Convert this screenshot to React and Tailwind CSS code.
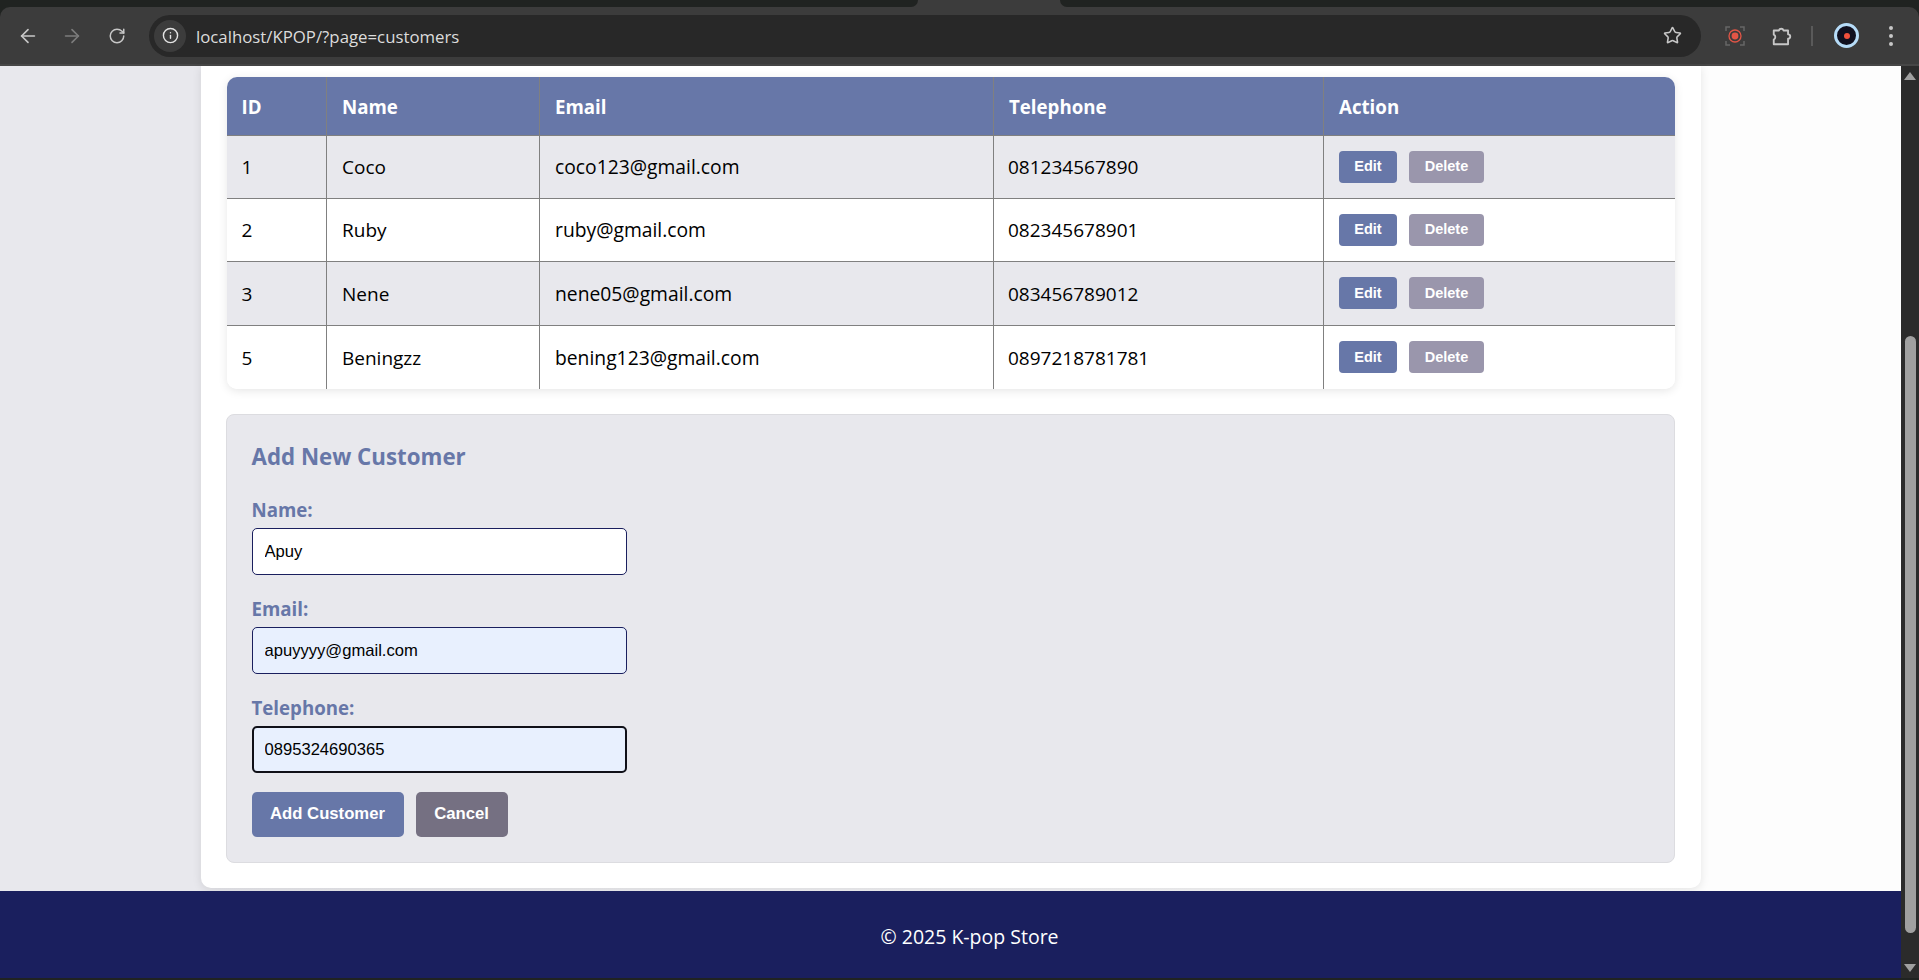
import React from 'react';
import { ArrowLeft, ArrowRight, RotateCw, Info, Star } from 'lucide-react';

const ROWS = [
  { id: 1, name: 'Coco', email: 'coco123@gmail.com', phone: '081234567890', height: 'h-[63px]' },
  { id: 2, name: 'Ruby', email: 'ruby@gmail.com', phone: '082345678901', height: 'h-[63px]' },
  { id: 3, name: 'Nene', email: 'nene05@gmail.com', phone: '083456789012', height: 'h-[64px]' },
  { id: 5, name: 'Beningzz', email: 'bening123@gmail.com', phone: '0897218781781', height: 'h-[64px]' },
];

const HEADERS = ['ID', 'Name', 'Email', 'Telephone', 'Action'];
const UI_FONT = "font-['Open_Sans','Noto_Sans',sans-serif]";

function BrowserBar() {
  return (
    <div className="h-[66px] shrink-0 bg-[#202321]">
      <div className="flex h-[7px] bg-[#3c3c3c]">
        <div className="w-[918px] rounded-br-[10px] bg-[#202321]" />
        <div className="ml-[142px] flex-1 rounded-bl-[10px] bg-[#202321]" />
      </div>
      <div className="flex h-[59px] items-center rounded-t-[10px] border-b-2 border-[#464646] bg-[#3c3c3c] pl-[17px] pr-[17px]">
        <ArrowLeft className="h-[22px] w-[22px] text-[#c7c7c7]" strokeWidth={1.8} />
        <ArrowRight className="ml-[22px] h-[22px] w-[22px] text-[#7c7c7c]" strokeWidth={1.8} />
        <RotateCw className="ml-[25px] h-[18px] w-[18px] text-[#c7c7c7]" strokeWidth={2} />
        <div className="ml-[23px] flex h-[42px] w-[1552px] items-center rounded-full bg-[#282828] pl-[5px] pr-[19px]">
          <div className="flex h-[32px] w-[32px] items-center justify-center rounded-full bg-[#3c3c3c]">
            <Info className="h-[17px] w-[17px] text-[#e3e3e3]" strokeWidth={2} />
          </div>
          <span className={`ml-[10px] pt-[2px] text-[16.8px] text-[#dcdcdc] ${UI_FONT}`}>localhost/KPOP/?page=customers</span>
          <Star className="ml-auto h-[19px] w-[19px] text-[#c7c7c7]" strokeWidth={2} />
        </div>
        <svg className="ml-[24px] h-[20px] w-[20px]" viewBox="0 0 20 20" fill="none">
          <path d="M1 5V1h4M15 1h4v4M19 15v4h-4M5 19H1v-4" stroke="#666" strokeWidth="1.5" />
          <circle cx="10" cy="10" r="6" stroke="#e25546" strokeWidth="1.3" />
          <circle cx="10" cy="10" r="3.4" fill="#e25546" />
        </svg>
        <svg className="ml-[26px] h-[22px] w-[22px]" viewBox="0 0 20 20" fill="none">
          <path
            d="M2.5 5H7.2a2.2 2.2 0 0 1 4.2 0H15.5V8.5a2 2 0 0 1 0 4V17.5H2.5V13.2a2.4 2.4 0 0 0 0-4.4Z"
            stroke="#c7c7c7"
            strokeWidth="1.7"
            strokeLinejoin="round"
          />
        </svg>
        <div className="ml-[18px] h-[20px] w-[2px] bg-[#5a5a5a]" />
        <div className="ml-[21px] flex h-[25px] w-[25px] items-center justify-center rounded-full border-[3px] border-[#b6dcf8] bg-[#10101f]">
          <div className="h-[6px] w-[6px] rounded-full bg-[#f0503c]" />
        </div>
        <div className="ml-[30px] flex flex-col gap-[4px]">
          <span className="h-[4px] w-[4px] rounded-full bg-[#c7c7c7]" />
          <span className="h-[4px] w-[4px] rounded-full bg-[#c7c7c7]" />
          <span className="h-[4px] w-[4px] rounded-full bg-[#c7c7c7]" />
        </div>
      </div>
    </div>
  );
}

function Scrollbar() {
  return (
    <div className="flex w-[18px] shrink-0 flex-col items-center bg-[#2b2b2b]">
      <div className="mt-[6px] h-0 w-0 border-x-[6px] border-b-[8px] border-x-transparent border-b-[#a0a0a0]" />
      <div className="mt-[256px] h-[597px] w-[11px] rounded-full bg-[#a0a0a0]" />
      <div className="mt-[31px] h-0 w-0 border-x-[6px] border-t-[8px] border-x-transparent border-t-[#a0a0a0]" />
    </div>
  );
}

function CustomerTable() {
  return (
    <div className="overflow-hidden rounded-[10px] bg-white shadow-[0_2px_10px_rgba(0,0,0,0.1)]">
      <table className={`w-full table-fixed border-collapse text-[19px] ${UI_FONT}`}>
        <colgroup>
          <col className="w-[100px]" />
          <col className="w-[213px]" />
          <col className="w-[454px]" />
          <col className="w-[330px]" />
          <col />
        </colgroup>
        <thead>
          <tr className="h-[58px] bg-[#6777a8] text-left text-[18.7px] text-white">
            {HEADERS.map(h => (
              <th key={h} className="border-x border-b border-[#808080] px-[15px] pt-[2px] font-bold first:border-l-0 last:border-r-0">{h}</th>
            ))}
          </tr>
        </thead>
        <tbody>
          {ROWS.map((row, i) => (
            <tr key={row.id} className={`${row.height} text-black ${i % 2 === 0 ? 'bg-[#e8e8ed]' : 'bg-white'}`}>
              <td className="border-b border-[#808080] px-[15px] pt-[2px] [tr:last-child>&]:border-b-0">{row.id}</td>
              <td className="border-x border-b border-[#808080] px-[15px] pt-[2px] [tr:last-child>&]:border-b-0">{row.name}</td>
              <td className="border-x border-b border-[#808080] px-[15px] pt-[2px] text-[19.3px] [tr:last-child>&]:border-b-0">{row.email}</td>
              <td className="border-x border-b border-[#808080] pl-[14px] pr-[15px] pt-[2px] [tr:last-child>&]:border-b-0">{row.phone}</td>
              <td className="border-b border-[#808080] px-[15px] [tr:last-child>&]:border-b-0">
                <div className="flex gap-[12px] font-['Liberation_Sans',sans-serif] text-[14.5px] font-bold text-white">
                  <button className="h-[32px] w-[58px] rounded-[4px] bg-[#6777a8] pt-[1px]">Edit</button>
                  <button className="h-[32px] w-[75px] rounded-[4px] bg-[#9a96ac] pt-[1px]">Delete</button>
                </div>
              </td>
            </tr>
          ))}
        </tbody>
      </table>
    </div>
  );
}

function Field({ label, value, className }) {
  return (
    <div>
      <label className={`mb-[6px] block text-[18.7px] font-bold leading-[25px] text-[#6777a8] ${UI_FONT}`}>{label}</label>
      <input
        readOnly
        value={value}
        className={`block h-[47px] w-[375px] rounded-[5px] font-['Liberation_Sans',sans-serif] text-[16.6px] text-black outline-none ${className}`}
      />
    </div>
  );
}

function CustomerForm() {
  return (
    <div className="mt-[25px] -ml-[1px] h-[449px] rounded-[8px] border border-[#dcdce0] bg-[#e8e8ed] px-[25px] pt-[27px]">
      <h3 className={`mb-[25px] text-[22.3px] font-bold leading-[30px] text-[#6777a8] ${UI_FONT}`}>Add New Customer</h3>
      <div className="flex flex-col gap-[21px]">
        <Field label="Name:" value="Apuy" className="border border-[#1a1f5e] bg-white px-[12px]" />
        <Field label="Email:" value="apuyyyy@gmail.com" className="border border-[#1a1f5e] bg-[#e8f0fe] px-[12px]" />
        <Field label="Telephone:" value="0895324690365" className="border-2 border-[#101018] bg-[#e8f0fe] px-[11px]" />
      </div>
      <div className="mt-[19px] flex gap-[12px] font-['Liberation_Sans',sans-serif] text-[16.7px] font-bold text-white">
        <button className="h-[45px] w-[152px] rounded-[5px] bg-[#6777a8] pb-[1px]">Add Customer</button>
        <button className="h-[45px] w-[92px] rounded-[5px] bg-[#757082] pb-[1px]">Cancel</button>
      </div>
    </div>
  );
}

export default function App() {
  return (
    <div className="flex h-screen flex-col overflow-hidden bg-[#202321]">
      <BrowserBar />
      <div className="flex h-[912px] min-h-0">
        <div className="flex min-w-0 flex-1 flex-col bg-[linear-gradient(90deg,#e8e8ed_11%,#fdfdfd_89%)]">
          <main className="mx-auto h-[822px] w-[1500px] shrink-0 rounded-b-[10px] bg-white px-[26px] pt-[11px] shadow-[0_2px_10px_rgba(0,0,0,0.1)]">
            <CustomerTable />
            <CustomerForm />
          </main>
          <footer className={`mt-[3px] flex h-[87px] shrink-0 items-center justify-center bg-[#1a1f5e] pl-[38px] pt-[4px] text-[19.5px] text-white ${UI_FONT}`}>
            © 2025 K-pop Store
          </footer>
        </div>
        <Scrollbar />
      </div>
    </div>
  );
}
